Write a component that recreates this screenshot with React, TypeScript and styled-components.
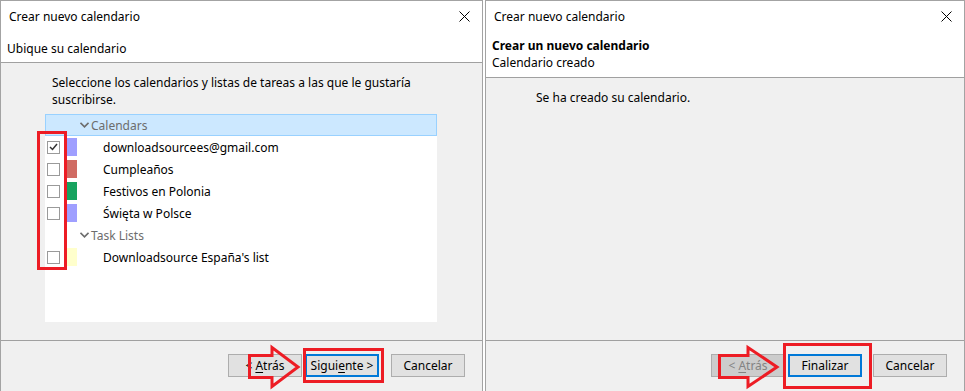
import * as React from "react";
import styled, { createGlobalStyle } from "styled-components";

const GlobalStyle = createGlobalStyle`
    html, body {
        margin: 0;
        padding: 0;
        background: #ffffff;
    }
    body {
        font-family: "Noto Sans", "Open Sans", sans-serif;
        font-size: 12px;
        color: #000;
    }
`;

const Screen = styled.div`
    display: flex;
    width: 965px;
    height: 391px;
    overflow: hidden;
    gap: 2px;
`;

const Dialog = styled.div<{ $width: number }>`
    position: relative;
    width: ${(p) => p.$width}px;
    height: 391px;
    box-sizing: border-box;
    border: 1px solid #a3a3a3;
    border-bottom: none;
    display: flex;
    flex-direction: column;
    background: #f0f0f0;
`;

const TitleBar = styled.div`
    height: 30px;
    display: flex;
    align-items: center;
    justify-content: space-between;
    padding: 0 12px 0 8px;
    background: #fff;
`;

const Header = styled.div<{ $height: number; $padTop: number }>`
    height: ${(p) => p.$height}px;
    box-sizing: border-box;
    background: #fff;
    border-bottom: 1px solid #a0a0a0;
    display: flex;
    flex-direction: column;
    padding: ${(p) => p.$padTop}px 6px 0;
`;

const HeaderLine = styled.div<{ $bold?: boolean }>`
    line-height: 17px;
    font-weight: ${(p) => (p.$bold ? 700 : 400)};
`;

const Body = styled.div<{ $padLeft: number }>`
    flex: 1;
    padding: 11px 0 0 ${(p) => p.$padLeft}px;
`;

const Intro = styled.div`
    width: 360px;
    line-height: 17px;
    margin-left: 7px;
`;

const ListBox = styled.div`
    margin-top: 6px;
    width: 392px;
    height: 208px;
    background: #fff;
`;

const GroupRow = styled.div<{ $selected?: boolean }>`
    height: ${(p) => (p.$selected ? 22 : 22)}px;
    box-sizing: border-box;
    display: flex;
    align-items: center;
    color: #6d6d6d;
    background: ${(p) => (p.$selected ? "#cce8ff" : "transparent")};
    border: ${(p) => (p.$selected ? "1px solid #99d1ff" : "none")};
    padding-left: ${(p) => (p.$selected ? 34 : 35)}px;
`;

const ItemRow = styled.div`
    height: 22px;
    display: flex;
    align-items: center;
`;

const CheckBox = styled.div`
    width: 13px;
    height: 13px;
    box-sizing: border-box;
    margin-left: 2px;
    border: 1px solid #9a9a9a;
    background: #fff;
    display: flex;
    align-items: center;
    justify-content: center;
`;

const Swatch = styled.div<{ $color: string }>`
    width: 11px;
    height: 18px;
    margin-left: 6px;
    background: ${(p) => p.$color};
`;

const ItemLabel = styled.span`
    margin-left: 26px;
`;

const Footer = styled.div`
    height: 51px;
    box-sizing: border-box;
    border-top: 1px solid #a0a0a0;
    display: flex;
    justify-content: flex-end;
    align-items: flex-start;
    padding: 13px 17px 0 0;
`;

const Button = styled.div<{ $default?: boolean; $disabled?: boolean; $gap?: number }>`
    width: 74px;
    height: 23px;
    box-sizing: border-box;
    margin-left: ${(p) => p.$gap ?? 0}px;
    display: flex;
    align-items: center;
    justify-content: center;
    background: ${(p) => (p.$disabled ? "#cccccc" : "#e1e1e1")};
    border: ${(p) => (p.$default ? "2px solid #0078d7" : "1px solid #adadad")};
    color: ${(p) => (p.$disabled ? "#838383" : "#000")};
    u {
        text-decoration: underline;
        text-underline-offset: 2px;
    }
`;

const Highlight = styled.div<{ $x: number; $y: number; $w: number; $h: number }>`
    position: absolute;
    left: ${(p) => p.$x}px;
    top: ${(p) => p.$y}px;
    width: ${(p) => p.$w}px;
    height: ${(p) => p.$h}px;
    box-sizing: border-box;
    border: 3px solid #ed1c24;
    pointer-events: none;
`;

const ArrowSvg = styled.svg<{ $x: number; $y: number }>`
    position: absolute;
    left: ${(p) => p.$x}px;
    top: ${(p) => p.$y}px;
    overflow: visible;
`;

const CloseIcon = () => (
    <svg width="11" height="11" viewBox="0 0 11 11">
        <path d="M0.5 0.5 L10.5 10.5 M10.5 0.5 L0.5 10.5" stroke="#000" strokeWidth="1" />
    </svg>
);

const Chevron = () => (
    <svg width="9" height="6" viewBox="0 0 9 6" style={{ marginRight: 2 }}>
        <path d="M0.5 0.8 L4.5 4.8 L8.5 0.8" stroke="#6d6d6d" strokeWidth="1.6" fill="none" />
    </svg>
);

const Check = () => (
    <svg width="9" height="8" viewBox="0 0 9 8">
        <path d="M1 4 L3.5 6.5 L8 1" stroke="#333" strokeWidth="1.5" fill="none" />
    </svg>
);

// red outline arrow pointing right, coords local to svg
const Arrow = ({ x, y, shaft, head }: { x: number; y: number; shaft: number; head: number }) => (
    <ArrowSvg $x={x} $y={y} width={shaft + head} height={42}>
        <path
            d={`M1.5 9.5 H${shaft} V1.5 L${shaft + head - 1} 21 L${shaft} 40.5 V31.5 H1.5 Z`}
            fill="none"
            stroke="#ed1c24"
            strokeWidth="3"
        />
    </ArrowSvg>
);

type Item = { label: string; color: string; checked?: boolean };

const calendars: Item[] = [
    { label: "downloadsourcees@gmail.com", color: "#9f9fff", checked: true },
    { label: "Cumpleaños", color: "#d06b63" },
    { label: "Festivos en Polonia", color: "#17a35f" },
    { label: "Święta w Polsce", color: "#9f9fff" },
];

const tasks: Item[] = [{ label: "Downloadsource España's list", color: "#ffffcc" }];

const ListItem = ({ item }: { item: Item }) => (
    <ItemRow>
        <CheckBox>{item.checked && <Check />}</CheckBox>
        <Swatch $color={item.color} />
        <ItemLabel>{item.label}</ItemLabel>
    </ItemRow>
);

const App = () => {
    return (
        <>
            <GlobalStyle />
            <Screen>
                <Dialog $width={483}>
                    <TitleBar>
                        <span>Crear nuevo calendario</span>
                        <CloseIcon />
                    </TitleBar>
                    <Header $height={32} $padTop={9}>
                        <HeaderLine>Ubique su calendario</HeaderLine>
                    </Header>
                    <Body $padLeft={44}>
                        <Intro>Seleccione los calendarios y listas de tareas a las que le gustaría suscribirse.</Intro>
                        <ListBox>
                            <GroupRow $selected>
                                <Chevron />
                                Calendars
                            </GroupRow>
                            {calendars.map((c) => (
                                <ListItem key={c.label} item={c} />
                            ))}
                            <GroupRow>
                                <Chevron />
                                Task Lists
                            </GroupRow>
                            {tasks.map((c) => (
                                <ListItem key={c.label} item={c} />
                            ))}
                        </ListBox>
                    </Body>
                    <Footer>
                        <Button>
                            &lt;&nbsp;<u>A</u>trás
                        </Button>
                        <Button $default $gap={3}>
                            Sigui<u>e</u>nte &gt;
                        </Button>
                        <Button $gap={12}>Cancelar</Button>
                    </Footer>
                    <Highlight $x={36} $y={130} $w={30} $h={139} />
                    <Highlight $x={302} $y={347} $w={81} $h={35} />
                    <Arrow x={247} y={345} shaft={24} head={27} />
                </Dialog>
                <Dialog $width={480}>
                    <TitleBar>
                        <span>Crear nuevo calendario</span>
                        <CloseIcon />
                    </TitleBar>
                    <Header $height={47} $padTop={6}>
                        <HeaderLine $bold>Crear un nuevo calendario</HeaderLine>
                        <HeaderLine>Calendario creado</HeaderLine>
                    </Header>
                    <Body $padLeft={43}>
                        <Intro>Se ha creado su calendario.</Intro>
                    </Body>
                    <Footer>
                        <Button $disabled>
                            &lt;&nbsp;<u>A</u>trás
                        </Button>
                        <Button $default $gap={3}>
                            Finalizar
                        </Button>
                        <Button $gap={11}>Cancelar</Button>
                    </Footer>
                    <Highlight $x={297} $y={342} $w={89} $h={46} />
                    <Arrow x={232} y={345} shaft={30} head={30} />
                </Dialog>
            </Screen>
        </>
    );
};

export default App;
